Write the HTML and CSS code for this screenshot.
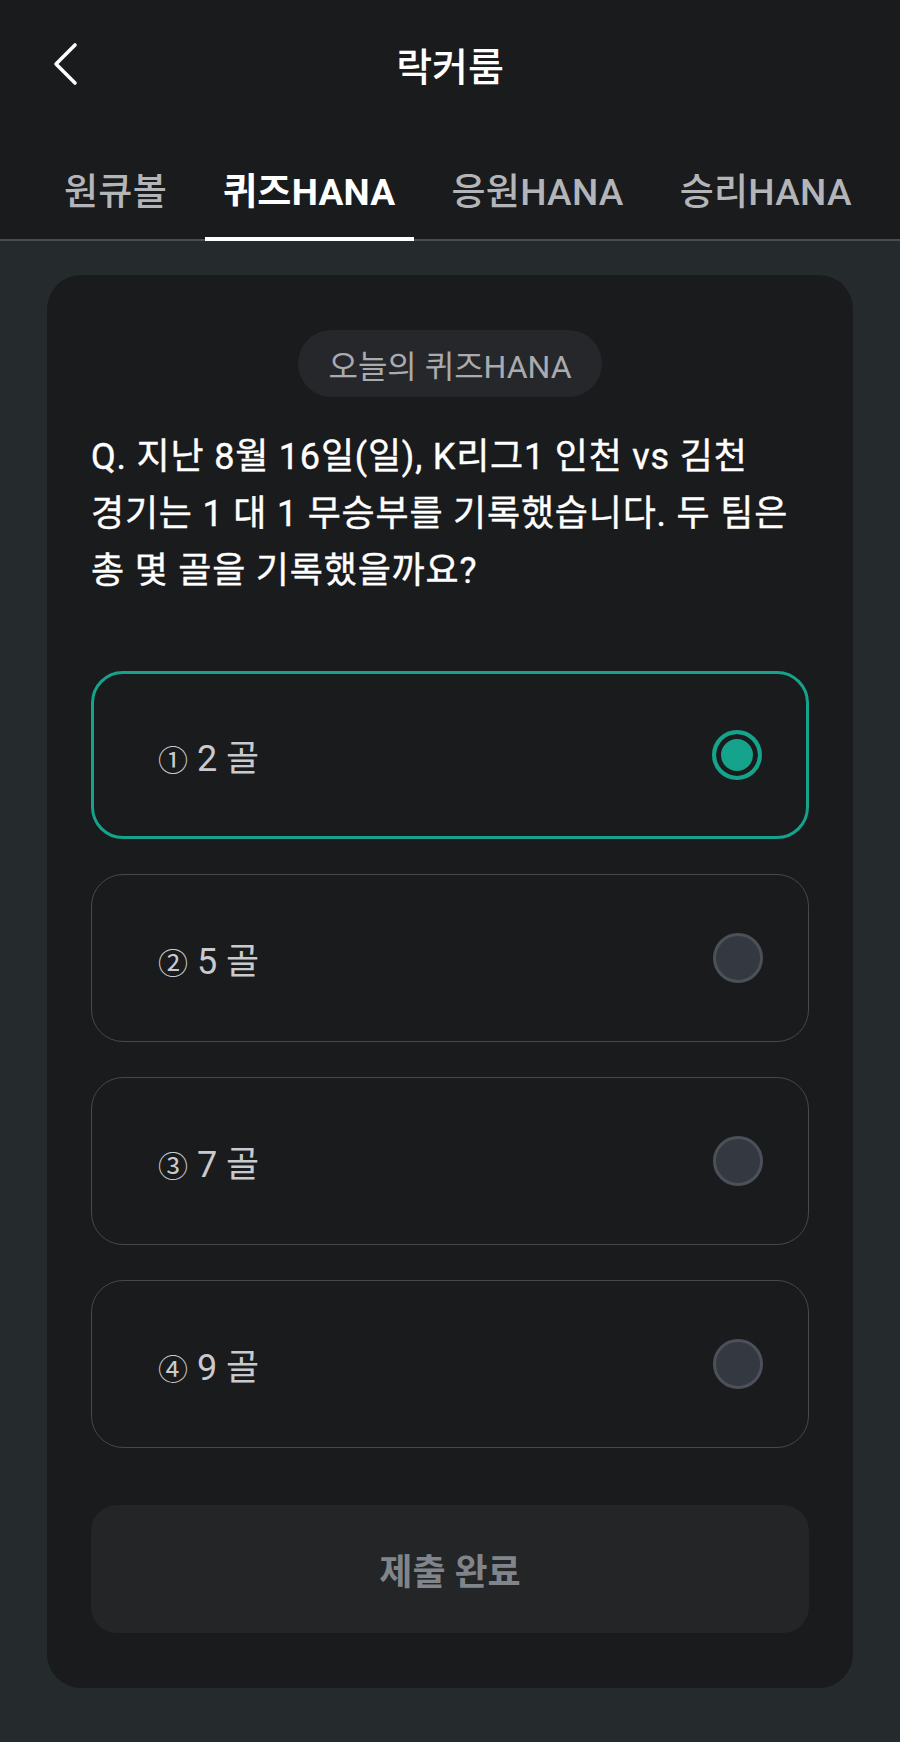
FILE: index.html
```html
<!DOCTYPE html>
<html lang="ko">
<head>
<meta charset="utf-8">
<title>락커룸</title>
<link rel="stylesheet" href="styles.css">
</head>
<body>
<header class="header">
  <div class="topbar">
    <button class="back" aria-label="뒤로">
      <svg width="30" height="46" viewBox="0 0 30 46"><path d="M25 4 L6 23 L25 42" fill="none" stroke="#ffffff" stroke-width="3.6" stroke-linecap="round" stroke-linejoin="round"/></svg>
    </button>
    <h1 class="title">락커룸</h1>
  </div>
  <nav class="tabs">
    <div class="tab">원큐볼</div>
    <div class="tab active">퀴즈HANA</div>
    <div class="tab">응원HANA</div>
    <div class="tab">승리HANA</div>
  </nav>
</header>
<main class="page">
  <section class="card">
    <div class="badge-row"><span class="badge">오늘의 퀴즈HANA</span></div>
    <p class="question">Q. 지난 8월 16일(일), K리그1 인천 vs 김천<br>경기는 1 대 1 무승부를 기록했습니다. 두 팀은<br>총 몇 골을 기록했을까요?</p>
    <div class="options">
      <div class="option selected"><span class="label"><span class="num">①</span> 2 골</span><span class="radio on"></span></div>
      <div class="option"><span class="label"><span class="num">②</span> 5 골</span><span class="radio"></span></div>
      <div class="option"><span class="label"><span class="num">③</span> 7 골</span><span class="radio"></span></div>
      <div class="option"><span class="label"><span class="num">④</span> 9 골</span><span class="radio"></span></div>
    </div>
    <button class="submit">제출 완료</button>
  </section>
</main>
</body>
</html>
```
FILE: styles.css
```css
* { box-sizing: border-box; }
html, body { margin: 0; padding: 0; }
body {
  width: 900px;
  min-height: 1742px;
  background: #252b2d;
  font-family: Roboto, "Noto Sans CJK KR", sans-serif;
  color: #ffffff;
}
.header {
  background: #1a1b1d;
  border-bottom: 2px solid #474d50;
}
.topbar {
  height: 128px;
  position: relative;
  display: flex;
  align-items: center;
  justify-content: center;
}
.back {
  position: absolute;
  left: 50px;
  top: 41px;
  background: none;
  border: 0;
  padding: 0;
  width: 30px;
  height: 46px;
}
.back svg { display: block; }
.title {
  margin: 0;
  font-size: 39px;
  font-weight: 500;
  color: #ffffff;
}
.tabs {
  display: flex;
  gap: 20px;
  padding-left: 46px;
  height: 111px;
}
.tab {
  position: relative;
  padding: 10px 18px 0;
  display: flex;
  align-items: center;
  font-size: 37px;
  font-weight: 500;
  color: #b3b5b9;
  letter-spacing: 0.3px;
}
.tab.active {
  color: #ffffff;
  font-weight: 700;
}
.tab.active::after {
  content: "";
  position: absolute;
  left: 0;
  right: 0;
  bottom: -2px;
  height: 4px;
  background: #ffffff;
}
.page {
  padding: 34px 47px 51px;
}
.card {
  background: #1a1b1d;
  border-radius: 34px;
  padding: 55px 44px 55px;
}
.badge-row {
  display: flex;
  justify-content: center;
}
.badge {
  display: inline-flex;
  align-items: center;
  justify-content: center;
  width: 304px;
  height: 67px;
  border-radius: 34px;
  background: #25272b;
  color: #a9abae;
  font-size: 32px;
  white-space: nowrap;
}
.question {
  margin: 32px 0 0;
  font-size: 36px;
  line-height: 57px;
  font-weight: 400;
  color: #ffffff;
  letter-spacing: 0.8px;
  white-space: nowrap;
  -webkit-text-stroke: 0.4px #ffffff;
}
.options {
  margin-top: 71px;
  display: flex;
  flex-direction: column;
  gap: 35px;
}
.option {
  height: 168px;
  border: 1.5px solid #45484d;
  border-radius: 32px;
  display: flex;
  align-items: center;
  justify-content: space-between;
  padding: 0 45px 0 66px;
}
.option.selected {
  border: 3px solid #16a38c;
  padding: 0 44px 0 64px;
}
.label {
  font-size: 36px;
  color: #c9cacd;
}
.num {
  font-size: 30px;
}
.radio {
  width: 50px;
  height: 50px;
  border-radius: 50%;
  background: #343840;
  border: 3px solid #4c5159;
}
.radio.on {
  background: #16a38c;
  border: 4px solid #16a38c;
  box-shadow: inset 0 0 0 5px #1a1b1d;
}
.submit {
  display: block;
  width: 100%;
  margin-top: 57px;
  height: 128px;
  border: 0;
  border-radius: 26px;
  background: #232527;
  color: #80858c;
  font-family: Roboto, "Noto Sans CJK KR", sans-serif;
  font-size: 36px;
  font-weight: 700;
}
```
